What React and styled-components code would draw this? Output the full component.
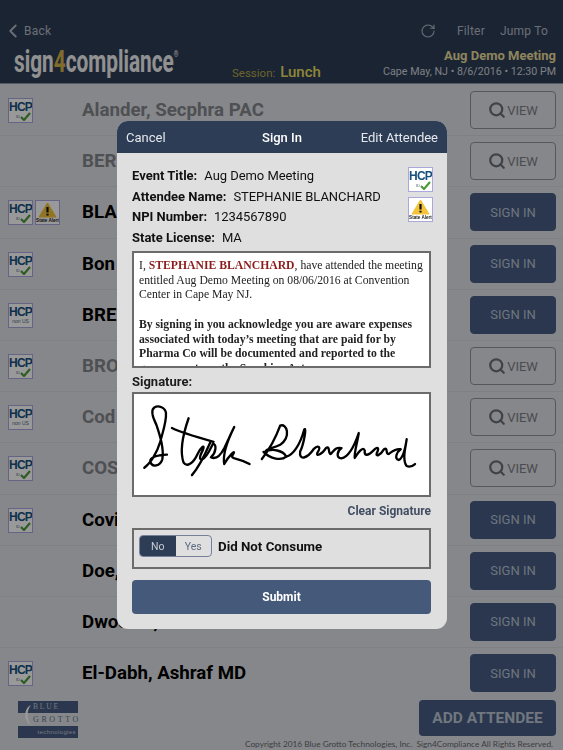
import React from 'react';
import styled, { createGlobalStyle } from 'styled-components';
import { ChevronLeft, RotateCw, Search } from 'lucide-react';

const GlobalStyle = createGlobalStyle`
  html, body {
    margin: 0;
    padding: 0;
    height: 100%;
    overflow: hidden;
    background: #e0e2e7;
    font-family: 'Roboto', 'Liberation Sans', sans-serif;
  }
  * { box-sizing: border-box; }
`;

const Page = styled.div`
  width: 563px;
  height: 750px;
  display: flex;
  flex-direction: column;
  overflow: hidden;
`;

const Header = styled.header`
  height: 84px;
  flex: none;
  background: #2e3d56;
  border-bottom: 1px solid #8d96a8;
  padding: 21px 7px 0 9px;
  display: flex;
  flex-direction: column;
`;

const NavBar = styled.nav`
  display: flex;
  align-items: center;
  height: 20px;
  color: #b2bac6;
  font-size: 12px;
  letter-spacing: 0.2px;
`;

const BackLink = styled.span`
  display: flex;
  align-items: center;
  gap: 0;
  margin-left: -7px;
  margin-right: auto;
`;

const NavLink = styled.span`
  margin-left: ${props => props.gap}px;
  margin-right: ${props => props.end || 0}px;
`;

const Brand = styled.div`
  display: flex;
  align-items: flex-end;
  margin-top: 7px;
  height: 33px;
`;

const LogoSlot = styled.div`
  width: 228px;
  flex: none;
  margin-right: -5px;
  padding-left: 5px;
`;

const Logo = styled.div`
  display: inline-block;
  transform: scaleX(0.65);
  transform-origin: left center;
  white-space: nowrap;
  font-weight: 700;
  font-size: 32px;
  line-height: 33px;
  margin-bottom: 3px;
  color: #f2f2f2;
  em {
    font-style: normal;
    color: #d4b34a;
  }
  sup {
    font-size: 9px;
    font-weight: 400;
    vertical-align: 15px;
    line-height: 0;
  }
`;

const Session = styled.div`
  color: #b3a848;
  font-size: 11.5px;
  line-height: 16px;
  b {
    font-size: 15px;
    font-weight: 500;
    margin-left: 2px;
    color: #ecdf60;
  }
`;

const MeetingInfo = styled.div`
  margin-left: auto;
  text-align: right;
  line-height: 16px;
  margin-bottom: 1px;
`;

const MeetingTitle = styled.div`
  color: #eadf9c;
  font-size: 13px;
  font-weight: 700;
`;

const MeetingPlace = styled.div`
  color: #d0d5dc;
  font-size: 10.7px;
`;

const List = styled.div`
  flex: 1;
  overflow: hidden;
  padding-top: 1px;
`;

const Row = styled.div`
  height: 51.2px;
  display: flex;
  align-items: center;
  padding: 0 7px 0 8px;
  border-bottom: 1px solid #d3d5da;
`;

const Badges = styled.div`
  width: 74px;
  flex: none;
  display: flex;
  gap: 2px;
  align-self: flex-start;
  padding-top: 13px;
`;

const Name = styled.div`
  font-size: 18.7px;
  font-weight: 700;
  white-space: nowrap;
  color: ${props => (props.dim ? '#83858b' : '#000')};
`;

const RowButton = styled.div`
  margin-left: auto;
  width: 86px;
  height: 38px;
  border-radius: 4px;
  display: flex;
  align-items: center;
  justify-content: center;
  gap: 1px;
  font-size: 13px;
  flex: none;
  background: ${props => (props.view ? 'transparent' : '#475d82')};
  border: 1px solid ${props => (props.view ? '#8f9197' : '#475d82')};
  color: ${props => (props.view ? '#7c7e85' : '#b8c2d2')};
`;

const BadgeFrame = styled.div`
  width: 25px;
  height: 25px;
  flex: none;
  background: #fff;
  border: 1px solid #a9a7dc;
  position: relative;
  overflow: hidden;
  text-align: center;
`;

const HcpText = styled.div`
  font-family: 'Liberation Sans', sans-serif;
  font-weight: 700;
  font-size: 12px;
  line-height: 11px;
  margin-top: 3px;
  color: #17507f;
  letter-spacing: -0.8px;
`;

const HcpSub = styled.div`
  display: flex;
  justify-content: ${props => (props.nonUs ? 'center' : 'flex-end')};
  align-items: center;
  font-family: 'Liberation Sans', sans-serif;
  font-size: ${props => (props.nonUs ? 5 : 4)}px;
  line-height: 7px;
  color: #4a5f78;
  padding-right: ${props => (props.nonUs ? 0 : 1)}px;
  margin-top: ${props => (props.nonUs ? 0 : -1)}px;
`;

const AlertLabel = styled.div`
  font-family: 'Liberation Sans', sans-serif;
  font-size: 4.6px;
  font-weight: 700;
  line-height: 6px;
  color: #222;
  white-space: nowrap;
`;

const HcpBadge = ({ nonUs }) => (
  <BadgeFrame>
    <HcpText>HCP</HcpText>
    {nonUs ? (
      <HcpSub nonUs>non US</HcpSub>
    ) : (
      <HcpSub>
        ID
        <svg width="11" height="9" viewBox="0 0 11 9">
          <path d="M1 5l3 3 6-7" fill="none" stroke="#4f9a3a" strokeWidth="2.2" />
        </svg>
      </HcpSub>
    )}
  </BadgeFrame>
);

const AlertBadge = () => (
  <BadgeFrame>
    <svg width="19" height="16" viewBox="0 0 19 16" style={{ display: 'block', margin: '1px auto 0' }}>
      <path d="M9.5 1L18 15H1z" fill="#f3c33a" stroke="#f3c33a" strokeLinejoin="round" />
      <path d="M9.5 5v5.5M9.5 11.8v1.7" stroke="#111" strokeWidth="2.2" />
    </svg>
    <AlertLabel>State Alert</AlertLabel>
  </BadgeFrame>
);

const Footer = styled.footer`
  position: relative;
  flex: none;
  height: 52px;
  display: flex;
  align-items: flex-start;
  padding: 2px 7px 0 18px;
`;

const GrottoLogo = styled.div`
  width: 60px;
  height: 37px;
  margin-top: 1px;
  display: flex;
  flex-direction: column;
  position: relative;
  font-family: 'Liberation Serif', serif;
`;

const GrottoBand = styled.div`
  background: #475d82;
  color: #c5cbd6;
  height: 12px;
  font-size: ${props => props.size}px;
  line-height: 12px;
  letter-spacing: ${props => props.spacing}px;
  text-align: ${props => props.align};
  font-family: ${props => (props.sans ? "'Liberation Sans', sans-serif" : 'inherit')};
  padding: 0 2px 0 15px;
  white-space: nowrap;
`;

const GrottoWord = styled.div`
  height: 13px;
  line-height: 13px;
  font-size: 8px;
  letter-spacing: 2.6px;
  color: #5d6f8d;
  padding-left: 15px;
  white-space: nowrap;
`;

const GrottoCurve = styled.svg`
  position: absolute;
  left: 4px;
  top: 3px;
`;

const AddButton = styled.div`
  margin-left: auto;
  width: 137px;
  height: 36px;
  border-radius: 4px;
  background: #475d82;
  color: #bcc5d4;
  font-size: 15.5px;
  font-weight: 700;
  display: flex;
  align-items: center;
  justify-content: center;
`;

const Copyright = styled.div`
  position: absolute;
  right: 10px;
  bottom: 0;
  font-family: 'Lato', sans-serif;
  font-size: 8.3px;
  line-height: 12px;
  white-space: pre;
  color: #65686f;
`;

const Overlay = styled.div`
  position: fixed;
  inset: 0;
  background: rgba(0, 0, 0, 0.4);
  display: flex;
  justify-content: center;
  align-items: flex-start;
  padding: 121px 116px 0 117px;
`;

const Modal = styled.div`
  width: 330px;
  height: 508px;
  border-radius: 11px;
  overflow: hidden;
  background: #dfdfdf;
  display: flex;
  flex-direction: column;
`;

const ModalBar = styled.div`
  height: 32px;
  flex: none;
  background: #2e3d56;
  color: #e4e7ec;
  font-size: 13px;
  display: grid;
  grid-template-columns: 1fr auto 1fr;
  align-items: center;
  padding: 0 9px;
  b {
    font-weight: 500;
    color: #fff;
  }
  span:last-child {
    text-align: right;
  }
`;

const ModalBody = styled.div`
  padding: 13px 15px 0;
  display: flex;
  flex-direction: column;
`;

const InfoBlock = styled.div`
  display: flex;
  justify-content: space-between;
  height: 85px;
`;

const InfoLine = styled.div`
  font-size: 13px;
  line-height: 20.7px;
  color: #111;
  white-space: nowrap;
  letter-spacing: -0.05px;
  b {
    font-weight: 700;
    margin-right: 7px;
    letter-spacing: 0;
  }
`;

const BadgeStack = styled.div`
  display: flex;
  flex-direction: column;
  gap: 5px;
  padding-top: 1px;
  margin-right: -1px;
`;

const Agreement = styled.div`
  height: 117px;
  margin: 0 1px 0 0;
  border: 2px solid #6b6b6b;
  background: #fff;
  overflow: hidden;
  padding: 6px 4px 0 5px;
  font-family: 'Liberation Serif', serif;
  font-size: 11.7px;
  line-height: 14.7px;
  color: #222;
  p {
    margin: 0 0 14.7px;
  }
  b.who {
    color: #8c1c1c;
  }
`;

const SectionLabel = styled.div`
  font-size: 13px;
  font-weight: 700;
  line-height: 16px;
  margin-top: 6px;
  margin-bottom: 2px;
  color: #1c1c1c;
`;

const SignatureBox = styled.div`
  height: 105px;
  margin-right: 1px;
  border: 2px solid #6b6b6b;
  background: #fff;
`;

const ClearLink = styled.div`
  text-align: right;
  margin: 7px 1px 0 0;
  font-size: 12px;
  font-weight: 700;
  line-height: 15px;
  color: #434e63;
`;

const ConsumeBox = styled.div`
  height: 41px;
  margin: 9px 1px 0 0;
  border: 2px solid #6b6b6b;
  display: flex;
  align-items: center;
  gap: 6px;
  padding: 0 0 5px 5px;
  font-size: 13.3px;
  font-weight: 700;
  color: #111;
`;

const Toggle = styled.div`
  width: 73px;
  height: 22px;
  display: flex;
  border: 1px solid #77809a;
  border-radius: 4px;
  overflow: hidden;
  font-weight: 400;
  font-size: 10.5px;
`;

const ToggleOption = styled.div`
  flex: 1;
  display: flex;
  align-items: center;
  justify-content: center;
  background: ${props => (props.on ? '#2e3d56' : 'transparent')};
  color: ${props => (props.on ? '#c8cdd6' : '#5e6a80')};
`;

const Submit = styled.div`
  height: 34px;
  margin: 11px 1px 0 0;
  border-radius: 4px;
  background: #45597a;
  color: #fff;
  font-size: 12px;
  font-weight: 700;
  display: flex;
  align-items: center;
  justify-content: center;
`;

const Signature = () => (
  <svg width="100%" height="100%" viewBox="51 44 886 300" preserveAspectRatio="none">
    <g fill="none" stroke="#000" strokeWidth="7" strokeLinecap="round" strokeLinejoin="round">
      <path d="M82 263C100 250 120 220 130 185C138 155 149 125 147 100C145 85 125 76 112 84C100 92 108 115 118 135C128 165 142 205 136 238C130 258 105 264 100 245C98 232 118 226 150 224" />
      <path d="M165 145C190 158 240 172 290 186" />
      <path d="M215 116C203 150 186 210 200 248C210 262 228 252 242 222C250 205 266 190 258 210C250 226 244 240 256 238C270 232 278 212 288 192" />
      <path d="M280 188C265 222 240 268 225 285" />
      <path d="M288 192C300 192 298 218 282 232C298 240 312 224 322 205C334 180 345 155 352 142C338 170 316 222 322 252C335 228 360 205 348 224C338 240 365 232 398 252" />
      <path d="M435 237C458 208 480 165 490 138C510 130 524 170 490 195C470 206 450 205 445 216C465 204 500 212 508 230C495 242 460 238 440 216" />
      <path d="M508 230C528 226 550 195 562 150C570 138 562 190 550 215C546 242 570 238 592 206C604 196 614 200 602 218C596 230 614 226 628 204C640 196 634 224 642 222C652 212 658 200 674 205C662 212 656 234 674 235C692 232 708 212 726 160C722 188 712 216 714 234C726 216 740 198 744 212C742 226 750 232 772 210C784 198 788 205 780 220C776 232 792 225 802 208C814 200 806 224 816 222C826 215 836 205 852 208C840 216 832 236 846 240C858 235 866 205 870 178C866 205 856 240 870 258C880 263 888 258 895 252" />
    </g>
  </svg>
);

const rows = [
  { name: 'Alander, Secphra PAC', hcp: 'id', view: true },
  { name: 'BER', view: true },
  { name: 'BLA', hcp: 'id', alert: true },
  { name: 'Bon', hcp: 'id' },
  { name: 'BRE', hcp: 'non' },
  { name: 'BRO', hcp: 'id', view: true },
  { name: 'Cod', hcp: 'non', view: true },
  { name: 'COS', hcp: 'id', view: true },
  { name: 'Covi', hcp: 'id' },
  { name: 'Doe,' },
  { name: 'Dwoskin, J MD' },
  { name: 'El-Dabh, Ashraf MD', hcp: 'id' },
];

const App = () => (
  <Page>
    <GlobalStyle />
    <Header>
      <NavBar>
        <BackLink>
          <ChevronLeft size={22} strokeWidth={2} />
          Back
        </BackLink>
        <RotateCw size={16} strokeWidth={1.6} />
        <NavLink gap={21}>Filter</NavLink>
        <NavLink gap={15} end={8}>Jump To</NavLink>
      </NavBar>
      <Brand>
        <LogoSlot>
          <Logo>
            sign<em>4</em>compliance<sup>®</sup>
          </Logo>
        </LogoSlot>
        <Session>
          Session: <b>Lunch</b>
        </Session>
        <MeetingInfo>
          <MeetingTitle>Aug Demo Meeting</MeetingTitle>
          <MeetingPlace>Cape May, NJ • 8/6/2016 • 12:30 PM</MeetingPlace>
        </MeetingInfo>
      </Brand>
    </Header>
    <List>
      {rows.map(row => (
        <Row key={row.name}>
          <Badges>
            {row.hcp && <HcpBadge nonUs={row.hcp === 'non'} />}
            {row.alert && <AlertBadge />}
          </Badges>
          <Name dim={row.view}>{row.name}</Name>
          <RowButton view={row.view}>
            {row.view && <Search size={18} strokeWidth={3} color="#6d6f76" />}
            {row.view ? 'VIEW' : 'SIGN IN'}
          </RowButton>
        </Row>
      ))}
    </List>
    <Footer>
      <GrottoLogo>
        <GrottoBand size={7.5} spacing={1.8}>BLUE</GrottoBand>
        <GrottoWord>GROTTO</GrottoWord>
        <GrottoBand size={6} spacing={0.4} align="right" sans>technologies</GrottoBand>
        <GrottoCurve width="10" height="24" viewBox="0 0 10 24">
          <path d="M9 1C2 4 1 16 9 22C5 16 4 7 9 1z" fill="#fff" />
        </GrottoCurve>
      </GrottoLogo>
      <AddButton>ADD ATTENDEE</AddButton>
      <Copyright>Copyright 2016 Blue Grotto Technologies, Inc.  Sign4Compliance All Rights Reserved.</Copyright>
    </Footer>
    <Overlay>
      <Modal>
        <ModalBar>
          <span>Cancel</span>
          <b>Sign In</b>
          <span>Edit Attendee</span>
        </ModalBar>
        <ModalBody>
          <InfoBlock>
            <div>
              <InfoLine><b>Event Title:</b>Aug Demo Meeting</InfoLine>
              <InfoLine><b>Attendee Name:</b>STEPHANIE BLANCHARD</InfoLine>
              <InfoLine><b>NPI Number:</b>1234567890</InfoLine>
              <InfoLine><b>State License:</b>MA</InfoLine>
            </div>
            <BadgeStack>
              <HcpBadge />
              <AlertBadge />
            </BadgeStack>
          </InfoBlock>
          <Agreement>
            <p>
              I, <b className="who">STEPHANIE BLANCHARD</b>, have attended the meeting entitled Aug Demo Meeting on
              08/06/2016 at Convention Center in Cape May NJ.
            </p>
            <b>
              By signing in you acknowledge you are aware expenses associated with today’s meeting that are paid for by
              Pharma Co will be documented and reported to the government per the Sunshine Act.
            </b>
          </Agreement>
          <SectionLabel>Signature:</SectionLabel>
          <SignatureBox>
            <Signature />
          </SignatureBox>
          <ClearLink>Clear Signature</ClearLink>
          <ConsumeBox>
            <Toggle>
              <ToggleOption on>No</ToggleOption>
              <ToggleOption>Yes</ToggleOption>
            </Toggle>
            Did Not Consume
          </ConsumeBox>
          <Submit>Submit</Submit>
        </ModalBody>
      </Modal>
    </Overlay>
  </Page>
);

export default App;
